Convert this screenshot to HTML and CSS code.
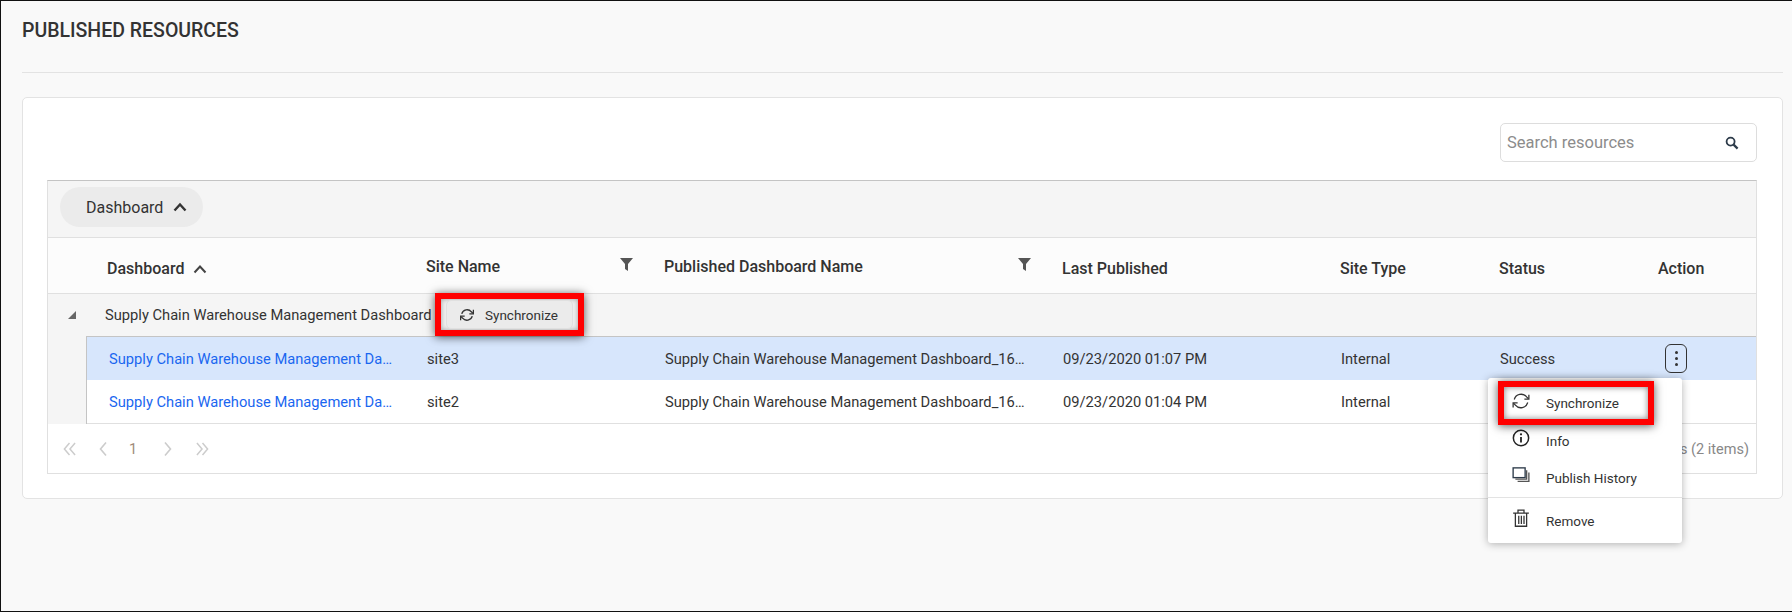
FILE: index.html
```html
<!DOCTYPE html>
<html lang="en">
	<head>
		<meta charset="utf-8"/>
		<link rel="stylesheet" href="styles.css">
		<title>Published Resources</title>
	</head>
	<body>
		<h1 class="page-title">PUBLISHED RESOURCES</h1>
		<hr class="page-rule">
		<section class="card">
			<div class="toolbar">
				<div class="search">
					<span class="search-text">Search resources</span>
					<svg class="search-icon" viewBox="0 0 14 14"><circle cx="5.6" cy="5.6" r="4" fill="none" stroke="#2d3b4a" stroke-width="1.8"/><path d="M8.6 8.6L12.6 12.6" stroke="#2d3b4a" stroke-width="2.2"/></svg>
				</div>
			</div>
			<div class="grid">
				<div class="group-bar">
					<div class="group-pill">Dashboard
						<svg class="chevron" viewBox="0 0 14 10"><path d="M1.5 8.5L7 2.5L12.5 8.5" fill="none" stroke="#333" stroke-width="2.4"/></svg>
					</div>
				</div>
				<div class="head-row columns">
					<div class="head-cell head-low">Dashboard
						<svg class="chevron" viewBox="0 0 14 10"><path d="M1.5 8.5L7 2.5L12.5 8.5" fill="none" stroke="#444" stroke-width="2"/></svg>
					</div>
					<div class="head-cell head-filter">Site Name
						<svg class="filter-icon" viewBox="0 0 13 13"><path d="M0 0H13L8 6V13L5 11V6Z" fill="#555"/></svg>
					</div>
					<div class="head-cell head-filter">Published Dashboard Name
						<svg class="filter-icon" viewBox="0 0 13 13"><path d="M0 0H13L8 6V13L5 11V6Z" fill="#555"/></svg>
					</div>
					<div class="head-cell head-low">Last Published</div>
					<div class="head-cell head-low">Site Type</div>
					<div class="head-cell head-low">Status</div>
					<div class="head-cell head-low">Action</div>
				</div>
				<div class="group-row">
					<span class="group-arrow"></span>
					<span class="group-name">Supply Chain Warehouse Management Dashboard</span>
					<div class="callout">
						<button class="sync-button" type="button">
							<svg class="sync-small" viewBox="0 0 24 24"><path d="M3 10A9.5 9.5 0 0 1 19.5 6.5L22 9M21 14A9.5 9.5 0 0 1 4.5 17.5L2 15" fill="none" stroke="#333" stroke-width="2.2"/><path d="M23 3V10H16M1 21V14H8" fill="none" stroke="#333" stroke-width="2.2"/></svg>
							Synchronize
						</button>
					</div>
				</div>
				<div class="rows">
					<div class="data-row columns row-selected">
						<a class="cell cell-link">Supply Chain Warehouse Management Da…</a>
						<div class="cell">site3</div>
						<div class="cell">Supply Chain Warehouse Management Dashboard_16…</div>
						<div class="cell">09/23/2020 01:07 PM</div>
						<div class="cell">Internal</div>
						<div class="cell">Success</div>
						<div class="cell cell-action">
							<button class="dots-button" type="button"><i></i><i></i><i></i></button>
							<div class="action-menu">
								<div class="menu-item menu-callout">
									<svg class="menu-icon" viewBox="0 0 24 24"><path d="M3 10A9.5 9.5 0 0 1 19.5 6.5L22 9M21 14A9.5 9.5 0 0 1 4.5 17.5L2 15" fill="none" stroke="#333" stroke-width="1.7"/><path d="M22.5 3.5V9.5H16.5M1.5 20.5V14.5H7.5" fill="none" stroke="#333" stroke-width="1.7"/></svg>
									Synchronize
								</div>
								<div class="menu-item">
									<svg class="menu-icon" viewBox="0 0 24 24"><circle cx="12" cy="12" r="10.2" fill="none" stroke="#222" stroke-width="2"/><path d="M12 10.5V18" stroke="#222" stroke-width="2.4"/><circle cx="12" cy="7" r="1.5" fill="#222"/></svg>
									Info
								</div>
								<div class="menu-item">
									<svg class="menu-icon" viewBox="0 0 24 24"><rect x="1.5" y="2.5" width="16" height="13" fill="#fff" stroke="#2d3b4a" stroke-width="1.8"/><path d="M19.5 5.5V17.5H4.5M22.5 8.5V20.5H7.5" fill="none" stroke="#555" stroke-width="1.8"/></svg>
									Publish History
								</div>
								<div class="menu-item menu-last">
									<svg class="menu-icon" viewBox="0 0 24 24"><path d="M1.5 5.5H22.5M8 5V1.5H16V5M4.5 5.5V23H19.5V5.5M9 9V20M12.5 9V20M16 9V20" fill="none" stroke="#333" stroke-width="1.7"/></svg>
									Remove
								</div>
							</div>
						</div>
					</div>
					<div class="data-row columns">
						<a class="cell cell-link">Supply Chain Warehouse Management Da…</a>
						<div class="cell">site2</div>
						<div class="cell">Supply Chain Warehouse Management Dashboard_16…</div>
						<div class="cell">09/23/2020 01:04 PM</div>
						<div class="cell">Internal</div>
						<div class="cell"></div>
						<div class="cell"></div>
					</div>
				</div>
				<div class="pager">
					<div class="pager-links">
						<svg class="pager-icon" viewBox="0 0 14 16"><path d="M7 1.5L1.5 8L7 14.5M13 1.5L7.5 8L13 14.5" fill="none" stroke="#ccc" stroke-width="1.6"/></svg>
						<svg class="pager-arrow" viewBox="0 0 8 16"><path d="M7 1.5L1.5 8L7 14.5" fill="none" stroke="#ccc" stroke-width="1.6"/></svg>
						<span class="pager-page">1</span>
						<svg class="pager-arrow pager-next" viewBox="0 0 8 16"><path d="M1 1.5L6.5 8L1 14.5" fill="none" stroke="#ccc" stroke-width="1.6"/></svg>
						<svg class="pager-icon" viewBox="0 0 14 16"><path d="M1 1.5L6.5 8L1 14.5M7 1.5L12.5 8L7 14.5" fill="none" stroke="#ccc" stroke-width="1.6"/></svg>
					</div>
					<span class="pager-info">s (2 items)</span>
				</div>
			</div>
		</section>
	</body>
</html>
```

FILE: styles.css
```css
* {
	margin: 0;
	padding: 0;
	box-sizing: border-box;
}
html, body {
	height: 612px;
	overflow: hidden;
}
body {
	padding: 0 9px 0 21px;
	background-color: #f9f9f9;
	border: 1px solid #111111;
	border-right: 0;
	font-family: Roboto, "Liberation Sans", sans-serif;
	font-size: 14px;
	color: #333333;
}
.page-title {
	padding-top: 20px;
	height: 71px;
	font-size: 19.5px;
	line-height: 20px;
	font-weight: 500;
	color: #333333;
}
.page-rule {
	border: 0;
	border-top: 1px solid #e3e3e3;
	margin-bottom: 24px;
}
.card {
	height: 402px;
	padding: 25px 25px 24px 24px;
	background-color: #ffffff;
	border: 1px solid #e3e3e3;
	border-radius: 5px;
}
.toolbar {
	display: flex;
	justify-content: flex-end;
	margin-bottom: 18px;
}
.search {
	display: flex;
	align-items: center;
	justify-content: space-between;
	width: 257px;
	height: 39px;
	padding: 0 17px 0 6px;
	border: 1px solid #dddddd;
	border-radius: 5px;
}
.search-text {
	font-size: 16.5px;
	color: #8c8c8c;
}
.search-icon {
	width: 14px;
	height: 14px;
}
.grid {
	height: 294px;
	border: 1px solid #e0e0e0;
	border-top-color: #c4c4c4;
	background-color: #ffffff;
}
.group-bar {
	height: 57px;
	padding: 6px 12px;
	background-color: #f5f5f5;
	border-bottom: 1px solid #e0e0e0;
}
.group-pill {
	display: flex;
	align-items: center;
	gap: 10px;
	width: 143px;
	height: 40px;
	padding-left: 26px;
	background-color: #ebebeb;
	border-radius: 20px;
	font-size: 16px;
}
.chevron {
	width: 14px;
	height: 10px;
}
.columns {
	display: grid;
	grid-template-columns: 319px 238px 398px 278px 159px 159px 1fr;
}
.head-row {
	height: 56px;
	padding-left: 59px;
	background-color: #fcfcfc;
	border-bottom: 1px solid #e0e0e0;
}
.head-cell {
	display: flex;
	align-items: center;
	gap: 9px;
	font-size: 16px;
	font-weight: 500;
	color: #333333;
}
.head-filter {
	justify-content: space-between;
	padding: 2px 31px 0 0;
}
.head-low {
	padding-top: 6px;
}
.filter-icon {
	width: 13px;
	height: 13px;
	margin-bottom: 4px;
}
.group-row {
	display: flex;
	align-items: center;
	height: 42px;
	background-color: #f5f5f5;
}
.group-arrow {
	width: 0;
	height: 0;
	margin: 0 29px 0 20px;
	border-style: solid;
	border-width: 0 0 8px 8px;
	border-color: transparent transparent #666666 transparent;
}
.group-name {
	width: 330px;
	font-size: 14.7px;
	white-space: nowrap;
}
.callout {
	position: relative;
	align-self: flex-start;
	margin-top: -1px;
	padding: 1px 5px;
	height: 43px;
	width: 149px;
	border: 6px solid #ff0000;
	background-color: #f0f0f0;
	box-shadow: 0 1px 9px rgba(0, 0, 0, 0.65), inset 0 0 5px rgba(0, 0, 0, 0.35);
}
.sync-button {
	display: flex;
	align-items: center;
	gap: 11px;
	width: 100%;
	height: 100%;
	padding-left: 13px;
	background-color: #ebebeb;
	border: 1px solid #e0e0e0;
	border-radius: 5px;
	font-family: inherit;
	font-size: 13.5px;
	color: #333333;
}
.sync-small {
	width: 14px;
	height: 14px;
}
.rows {
	margin-left: 38px;
	background-color: #ffffff;
	border-left: 1px solid #c4c4c4;
	border-top: 1px solid #c4c4c4;
	box-shadow: -38px 0 0 #f5f5f5;
}
.data-row {
	height: 44px;
	padding-left: 21px;
	align-items: center;
	border-bottom: 1px solid #e0e0e0;
}
.row-selected {
	height: 43px;
	background-color: #d7e6fc;
	border-bottom: 0;
}
.cell {
	font-size: 14.7px;
	white-space: nowrap;
}
.cell-link {
	padding-left: 1px;
	color: #1a66f0;
}
.cell-action {
	position: relative;
}
.dots-button {
	display: flex;
	flex-direction: column;
	align-items: center;
	justify-content: center;
	gap: 3px;
	width: 22px;
	height: 29px;
	margin-left: 6px;
	background-color: transparent;
	border: 1px solid #333333;
	border-radius: 6px;
}
.dots-button i {
	width: 3px;
	height: 3px;
	background-color: #333333;
	border-radius: 50%;
}
.action-menu {
	position: absolute;
	top: 34px;
	right: 74px;
	z-index: 2;
	width: 194px;
	height: 165px;
	padding-top: 3px;
	background-color: #ffffff;
	border-radius: 3px;
	box-shadow: 0 1px 8px rgba(0, 0, 0, 0.3);
}
.menu-item {
	display: flex;
	align-items: center;
	gap: 16px;
	height: 37px;
	padding-left: 24px;
	font-size: 13.5px;
	color: #333333;
}
.menu-icon {
	width: 18px;
	height: 18px;
	margin-bottom: 5px;
}
.menu-callout {
	position: relative;
	width: 156px;
	height: 44px;
	margin: 0 0 -3px 10px;
	padding-left: 8px;
	border: 6px solid #ff0000;
	box-shadow: 0 1px 9px rgba(0, 0, 0, 0.65), inset 0 0 6px rgba(0, 0, 0, 0.5);
}
.menu-last {
	margin-top: 1px;
	height: 46px;
	border-top: 1px solid #e3e3e3;
}
.pager {
	display: flex;
	align-items: center;
	justify-content: space-between;
	height: 50px;
	padding: 0 7px 0 15px;
	color: #888888;
}
.pager-links {
	display: flex;
	align-items: center;
}
.pager-icon {
	width: 13px;
	height: 16px;
}
.pager-arrow {
	width: 8px;
	height: 16px;
	margin-left: 23px;
}
.pager-next {
	margin-left: 27px;
}
.pager-next + .pager-icon {
	margin-left: 24px;
}
.pager-page {
	margin-left: 22px;
	font-size: 14.5px;
	color: #a08a7a;
}
.pager-info {
	font-size: 14.5px;
}
```
